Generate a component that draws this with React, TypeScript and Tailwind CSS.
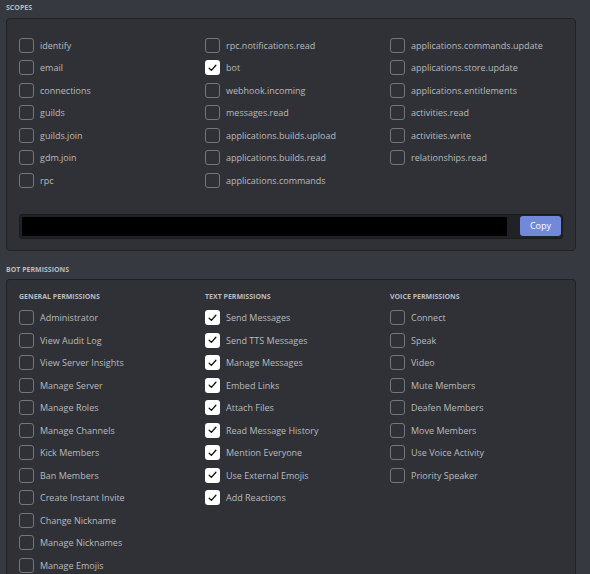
import React from "react";

type Item = { label: string; checked?: boolean };

const scopes: Item[][] = [
  [
    { label: "identify" },
    { label: "email" },
    { label: "connections" },
    { label: "guilds" },
    { label: "guilds.join" },
    { label: "gdm.join" },
    { label: "rpc" },
  ],
  [
    { label: "rpc.notifications.read" },
    { label: "bot", checked: true },
    { label: "webhook.incoming" },
    { label: "messages.read" },
    { label: "applications.builds.upload" },
    { label: "applications.builds.read" },
    { label: "applications.commands" },
  ],
  [
    { label: "applications.commands.update" },
    { label: "applications.store.update" },
    { label: "applications.entitlements" },
    { label: "activities.read" },
    { label: "activities.write" },
    { label: "relationships.read" },
  ],
];

const permissions: { title: string; items: Item[] }[] = [
  {
    title: "General Permissions",
    items: [
      { label: "Administrator" },
      { label: "View Audit Log" },
      { label: "View Server Insights" },
      { label: "Manage Server" },
      { label: "Manage Roles" },
      { label: "Manage Channels" },
      { label: "Kick Members" },
      { label: "Ban Members" },
      { label: "Create Instant Invite" },
      { label: "Change Nickname" },
      { label: "Manage Nicknames" },
      { label: "Manage Emojis" },
    ],
  },
  {
    title: "Text Permissions",
    items: [
      { label: "Send Messages", checked: true },
      { label: "Send TTS Messages", checked: true },
      { label: "Manage Messages", checked: true },
      { label: "Embed Links", checked: true },
      { label: "Attach Files", checked: true },
      { label: "Read Message History", checked: true },
      { label: "Mention Everyone", checked: true },
      { label: "Use External Emojis", checked: true },
      { label: "Add Reactions", checked: true },
    ],
  },
  {
    title: "Voice Permissions",
    items: [
      { label: "Connect" },
      { label: "Speak" },
      { label: "Video" },
      { label: "Mute Members" },
      { label: "Deafen Members" },
      { label: "Move Members" },
      { label: "Use Voice Activity" },
      { label: "Priority Speaker" },
    ],
  },
];

function Checkbox({ label, checked }: Item) {
  return (
    <label className="flex h-[22.5px] items-center gap-[6px]">
      {checked ? (
        <span className="flex h-[15px] w-[15px] shrink-0 items-center justify-center rounded-[3px] bg-white">
          <svg width="9" height="8" viewBox="0 0 9 8" fill="none">
            <path
              d="M1.2 4.3 3.4 6.4 7.9 1.2"
              stroke="#111"
              strokeWidth="1.3"
              strokeLinecap="round"
              strokeLinejoin="round"
            />
          </svg>
        </span>
      ) : (
        <span className="h-[15px] w-[15px] shrink-0 rounded-[3px] border border-[#72767d]" />
      )}
      <span className="text-[9px] text-[#b9bbbe]">{label}</span>
    </label>
  );
}

function SectionLabel({ children }: { children: React.ReactNode }) {
  return (
    <h2 className="mb-[4px] text-[7px] leading-[12px] font-bold uppercase text-[#b9bbbe]">
      {children}
    </h2>
  );
}

export default function App() {
  return (
    <div
      className="min-h-[574px] w-full bg-[#36393f] pt-[2px] pr-[14px] pl-[6px]"
      style={{ fontFamily: '"Open Sans", "Noto Sans", sans-serif' }}
    >
      <SectionLabel>Scopes</SectionLabel>
      <div className="rounded-[4px] border border-[#202225] bg-[#2f3136] px-[12px] pt-[15px] pb-[11px]">
        <div className="grid grid-cols-[186px_185px_1fr]">
          {scopes.map((col, i) => (
            <div key={i} className="flex flex-col">
              {col.map((item) => (
                <Checkbox key={item.label} {...item} />
              ))}
            </div>
          ))}
        </div>
        <div className="mt-[22px] flex h-[25px] items-center rounded-[3px] border border-[#1a1b1e] bg-[#202225] pr-[1px] pl-[2px]">
          <div className="h-[19px] w-[485px] bg-black" />
          <button className="ml-auto h-[20px] w-[41px] rounded-[3px] bg-[#7289da] text-[9px] text-white">
            Copy
          </button>
        </div>
      </div>

      <div className="mt-[13px]">
        <h2 className="mb-[3px] text-[7px] leading-[12px] font-bold uppercase text-[#b9bbbe]">
          Bot Permissions
        </h2>
      </div>
      <div className="rounded-t-[4px] border border-b-0 border-[#202225] bg-[#2f3136] px-[12px] pt-[11px]">
        <div className="grid grid-cols-[186px_185px_1fr]">
          {permissions.map((col) => (
            <div key={col.title} className="flex flex-col">
              <h3 className="mb-[4px] h-[12px] text-[7px] leading-[12px] font-bold uppercase text-[#b9bbbe]">
                {col.title}
              </h3>
              {col.items.map((item) => (
                <Checkbox key={item.label} {...item} />
              ))}
            </div>
          ))}
        </div>
      </div>
    </div>
  );
}
